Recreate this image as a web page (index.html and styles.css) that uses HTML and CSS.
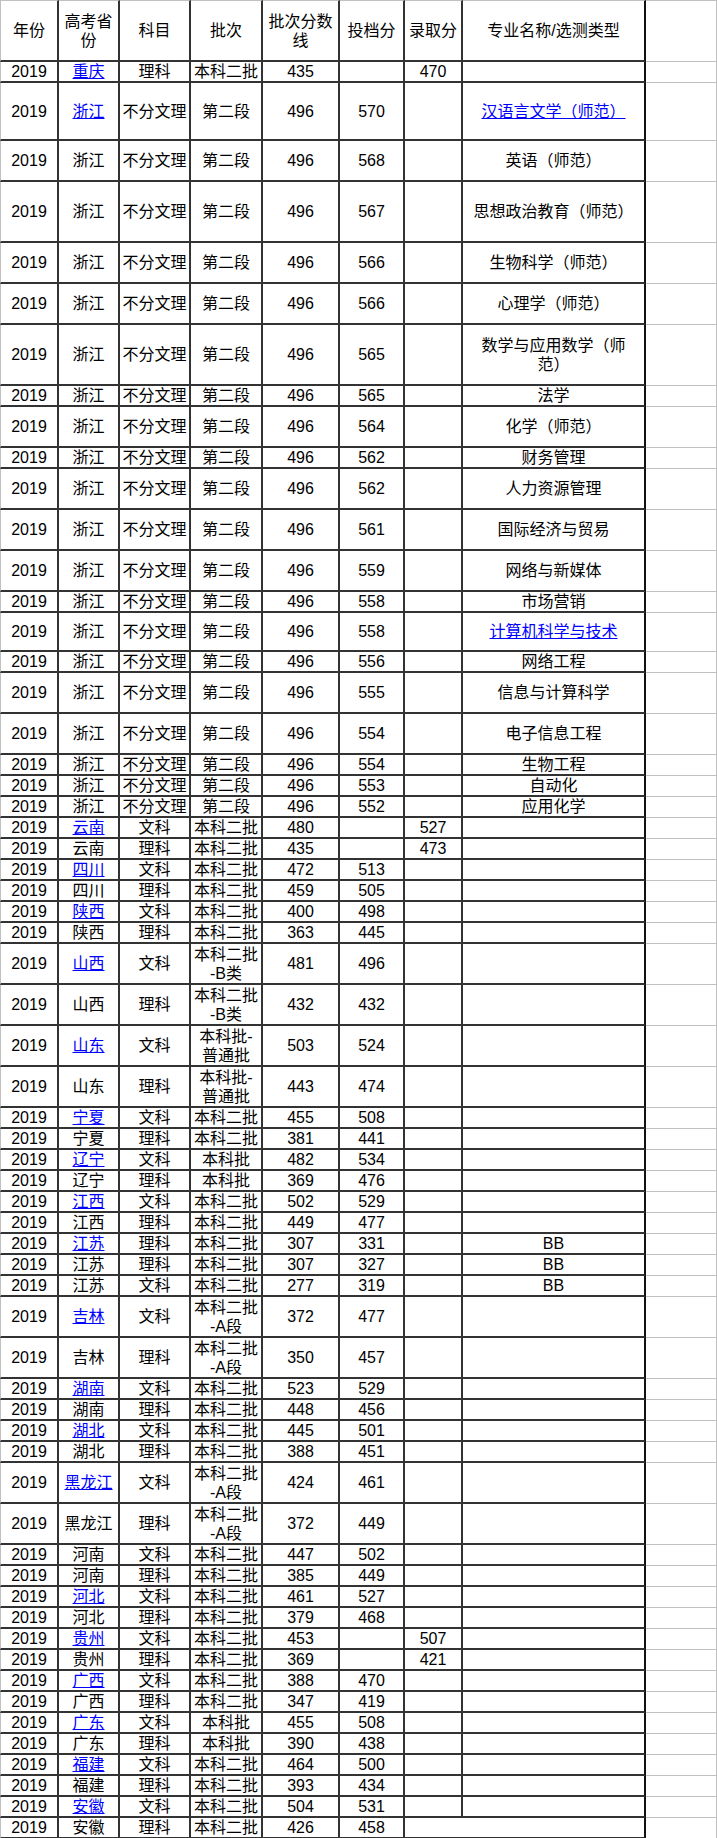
FILE: index.html
```html
<!DOCTYPE html>
<html lang="zh-CN">
<head>
<meta charset="utf-8">
<title>2019 录取分数</title>
<link rel="stylesheet" href="styles.css">
</head>
<body>
<table class="grid">
<thead>
<tr class="h62">
<th class="c1">年份</th><th class="c2">高考省份</th><th class="c3">科目</th><th class="c4">批次</th><th class="c5">批次分数线</th><th class="c6">投档分</th><th class="c7">录取分</th><th class="c8 mj">专业名称/选测类型</th><th class="c9 x"></th>
</tr>
</thead>
<tbody>
<tr class="h21"><td>2019</td><td><a href="#">重庆</a></td><td>理科</td><td>本科二批</td><td>435</td><td></td><td>470</td><td class="mj"></td><td class="x"></td></tr>
<tr class="h58"><td>2019</td><td><a href="#">浙江</a></td><td>不分文理</td><td>第二段</td><td>496</td><td>570</td><td></td><td class="mj"><a href="#">汉语言文学（师范）</a></td><td class="x"></td></tr>
<tr class="h41"><td>2019</td><td>浙江</td><td>不分文理</td><td>第二段</td><td>496</td><td>568</td><td></td><td class="mj">英语（师范）</td><td class="x"></td></tr>
<tr class="h61"><td>2019</td><td>浙江</td><td>不分文理</td><td>第二段</td><td>496</td><td>567</td><td></td><td class="mj">思想政治教育（师范）</td><td class="x"></td></tr>
<tr class="h41"><td>2019</td><td>浙江</td><td>不分文理</td><td>第二段</td><td>496</td><td>566</td><td></td><td class="mj">生物科学（师范）</td><td class="x"></td></tr>
<tr class="h41"><td>2019</td><td>浙江</td><td>不分文理</td><td>第二段</td><td>496</td><td>566</td><td></td><td class="mj">心理学（师范）</td><td class="x"></td></tr>
<tr class="h61"><td>2019</td><td>浙江</td><td>不分文理</td><td>第二段</td><td>496</td><td>565</td><td></td><td class="mj">数学与应用数学（师范）</td><td class="x"></td></tr>
<tr class="h21"><td>2019</td><td>浙江</td><td>不分文理</td><td>第二段</td><td>496</td><td>565</td><td></td><td class="mj">法学</td><td class="x"></td></tr>
<tr class="h41"><td>2019</td><td>浙江</td><td>不分文理</td><td>第二段</td><td>496</td><td>564</td><td></td><td class="mj">化学（师范）</td><td class="x"></td></tr>
<tr class="h21"><td>2019</td><td>浙江</td><td>不分文理</td><td>第二段</td><td>496</td><td>562</td><td></td><td class="mj">财务管理</td><td class="x"></td></tr>
<tr class="h41"><td>2019</td><td>浙江</td><td>不分文理</td><td>第二段</td><td>496</td><td>562</td><td></td><td class="mj">人力资源管理</td><td class="x"></td></tr>
<tr class="h41"><td>2019</td><td>浙江</td><td>不分文理</td><td>第二段</td><td>496</td><td>561</td><td></td><td class="mj">国际经济与贸易</td><td class="x"></td></tr>
<tr class="h41"><td>2019</td><td>浙江</td><td>不分文理</td><td>第二段</td><td>496</td><td>559</td><td></td><td class="mj">网络与新媒体</td><td class="x"></td></tr>
<tr class="h21"><td>2019</td><td>浙江</td><td>不分文理</td><td>第二段</td><td>496</td><td>558</td><td></td><td class="mj">市场营销</td><td class="x"></td></tr>
<tr class="h39"><td>2019</td><td>浙江</td><td>不分文理</td><td>第二段</td><td>496</td><td>558</td><td></td><td class="mj"><a href="#">计算机科学与技术</a></td><td class="x"></td></tr>
<tr class="h21"><td>2019</td><td>浙江</td><td>不分文理</td><td>第二段</td><td>496</td><td>556</td><td></td><td class="mj">网络工程</td><td class="x"></td></tr>
<tr class="h41"><td>2019</td><td>浙江</td><td>不分文理</td><td>第二段</td><td>496</td><td>555</td><td></td><td class="mj">信息与计算科学</td><td class="x"></td></tr>
<tr class="h41"><td>2019</td><td>浙江</td><td>不分文理</td><td>第二段</td><td>496</td><td>554</td><td></td><td class="mj">电子信息工程</td><td class="x"></td></tr>
<tr class="h21"><td>2019</td><td>浙江</td><td>不分文理</td><td>第二段</td><td>496</td><td>554</td><td></td><td class="mj">生物工程</td><td class="x"></td></tr>
<tr class="h21"><td>2019</td><td>浙江</td><td>不分文理</td><td>第二段</td><td>496</td><td>553</td><td></td><td class="mj">自动化</td><td class="x"></td></tr>
<tr class="h21"><td>2019</td><td>浙江</td><td>不分文理</td><td>第二段</td><td>496</td><td>552</td><td></td><td class="mj">应用化学</td><td class="x"></td></tr>
<tr class="h21"><td>2019</td><td><a href="#">云南</a></td><td>文科</td><td>本科二批</td><td>480</td><td></td><td>527</td><td class="mj"></td><td class="x"></td></tr>
<tr class="h21"><td>2019</td><td>云南</td><td>理科</td><td>本科二批</td><td>435</td><td></td><td>473</td><td class="mj"></td><td class="x"></td></tr>
<tr class="h21"><td>2019</td><td><a href="#">四川</a></td><td>文科</td><td>本科二批</td><td>472</td><td>513</td><td></td><td class="mj"></td><td class="x"></td></tr>
<tr class="h21"><td>2019</td><td>四川</td><td>理科</td><td>本科二批</td><td>459</td><td>505</td><td></td><td class="mj"></td><td class="x"></td></tr>
<tr class="h21"><td>2019</td><td><a href="#">陕西</a></td><td>文科</td><td>本科二批</td><td>400</td><td>498</td><td></td><td class="mj"></td><td class="x"></td></tr>
<tr class="h21"><td>2019</td><td>陕西</td><td>理科</td><td>本科二批</td><td>363</td><td>445</td><td></td><td class="mj"></td><td class="x"></td></tr>
<tr class="h41"><td>2019</td><td><a href="#">山西</a></td><td>文科</td><td>本科二批<wbr>-B类</td><td>481</td><td>496</td><td></td><td class="mj"></td><td class="x"></td></tr>
<tr class="h41"><td>2019</td><td>山西</td><td>理科</td><td>本科二批<wbr>-B类</td><td>432</td><td>432</td><td></td><td class="mj"></td><td class="x"></td></tr>
<tr class="h41"><td>2019</td><td><a href="#">山东</a></td><td>文科</td><td>本科批-<wbr>普通批</td><td>503</td><td>524</td><td></td><td class="mj"></td><td class="x"></td></tr>
<tr class="h41"><td>2019</td><td>山东</td><td>理科</td><td>本科批-<wbr>普通批</td><td>443</td><td>474</td><td></td><td class="mj"></td><td class="x"></td></tr>
<tr class="h21"><td>2019</td><td><a href="#">宁夏</a></td><td>文科</td><td>本科二批</td><td>455</td><td>508</td><td></td><td class="mj"></td><td class="x"></td></tr>
<tr class="h21"><td>2019</td><td>宁夏</td><td>理科</td><td>本科二批</td><td>381</td><td>441</td><td></td><td class="mj"></td><td class="x"></td></tr>
<tr class="h21"><td>2019</td><td><a href="#">辽宁</a></td><td>文科</td><td>本科批</td><td>482</td><td>534</td><td></td><td class="mj"></td><td class="x"></td></tr>
<tr class="h21"><td>2019</td><td>辽宁</td><td>理科</td><td>本科批</td><td>369</td><td>476</td><td></td><td class="mj"></td><td class="x"></td></tr>
<tr class="h21"><td>2019</td><td><a href="#">江西</a></td><td>文科</td><td>本科二批</td><td>502</td><td>529</td><td></td><td class="mj"></td><td class="x"></td></tr>
<tr class="h21"><td>2019</td><td>江西</td><td>理科</td><td>本科二批</td><td>449</td><td>477</td><td></td><td class="mj"></td><td class="x"></td></tr>
<tr class="h21"><td>2019</td><td><a href="#">江苏</a></td><td>理科</td><td>本科二批</td><td>307</td><td>331</td><td></td><td class="mj">BB</td><td class="x"></td></tr>
<tr class="h21"><td>2019</td><td>江苏</td><td>理科</td><td>本科二批</td><td>307</td><td>327</td><td></td><td class="mj">BB</td><td class="x"></td></tr>
<tr class="h21"><td>2019</td><td>江苏</td><td>文科</td><td>本科二批</td><td>277</td><td>319</td><td></td><td class="mj">BB</td><td class="x"></td></tr>
<tr class="h41"><td>2019</td><td><a href="#">吉林</a></td><td>文科</td><td>本科二批<wbr>-A段</td><td>372</td><td>477</td><td></td><td class="mj"></td><td class="x"></td></tr>
<tr class="h41"><td>2019</td><td>吉林</td><td>理科</td><td>本科二批<wbr>-A段</td><td>350</td><td>457</td><td></td><td class="mj"></td><td class="x"></td></tr>
<tr class="h21"><td>2019</td><td><a href="#">湖南</a></td><td>文科</td><td>本科二批</td><td>523</td><td>529</td><td></td><td class="mj"></td><td class="x"></td></tr>
<tr class="h21"><td>2019</td><td>湖南</td><td>理科</td><td>本科二批</td><td>448</td><td>456</td><td></td><td class="mj"></td><td class="x"></td></tr>
<tr class="h21"><td>2019</td><td><a href="#">湖北</a></td><td>文科</td><td>本科二批</td><td>445</td><td>501</td><td></td><td class="mj"></td><td class="x"></td></tr>
<tr class="h21"><td>2019</td><td>湖北</td><td>理科</td><td>本科二批</td><td>388</td><td>451</td><td></td><td class="mj"></td><td class="x"></td></tr>
<tr class="h41"><td>2019</td><td><a href="#">黑龙江</a></td><td>文科</td><td>本科二批<wbr>-A段</td><td>424</td><td>461</td><td></td><td class="mj"></td><td class="x"></td></tr>
<tr class="h41"><td>2019</td><td>黑龙江</td><td>理科</td><td>本科二批<wbr>-A段</td><td>372</td><td>449</td><td></td><td class="mj"></td><td class="x"></td></tr>
<tr class="h21"><td>2019</td><td>河南</td><td>文科</td><td>本科二批</td><td>447</td><td>502</td><td></td><td class="mj"></td><td class="x"></td></tr>
<tr class="h21"><td>2019</td><td>河南</td><td>理科</td><td>本科二批</td><td>385</td><td>449</td><td></td><td class="mj"></td><td class="x"></td></tr>
<tr class="h21"><td>2019</td><td><a href="#">河北</a></td><td>文科</td><td>本科二批</td><td>461</td><td>527</td><td></td><td class="mj"></td><td class="x"></td></tr>
<tr class="h21"><td>2019</td><td>河北</td><td>理科</td><td>本科二批</td><td>379</td><td>468</td><td></td><td class="mj"></td><td class="x"></td></tr>
<tr class="h21"><td>2019</td><td><a href="#">贵州</a></td><td>文科</td><td>本科二批</td><td>453</td><td></td><td>507</td><td class="mj"></td><td class="x"></td></tr>
<tr class="h21"><td>2019</td><td>贵州</td><td>理科</td><td>本科二批</td><td>369</td><td></td><td>421</td><td class="mj"></td><td class="x"></td></tr>
<tr class="h21"><td>2019</td><td><a href="#">广西</a></td><td>文科</td><td>本科二批</td><td>388</td><td>470</td><td></td><td class="mj"></td><td class="x"></td></tr>
<tr class="h21"><td>2019</td><td>广西</td><td>理科</td><td>本科二批</td><td>347</td><td>419</td><td></td><td class="mj"></td><td class="x"></td></tr>
<tr class="h21"><td>2019</td><td><a href="#">广东</a></td><td>文科</td><td>本科批</td><td>455</td><td>508</td><td></td><td class="mj"></td><td class="x"></td></tr>
<tr class="h21"><td>2019</td><td>广东</td><td>理科</td><td>本科批</td><td>390</td><td>438</td><td></td><td class="mj"></td><td class="x"></td></tr>
<tr class="h21"><td>2019</td><td><a href="#">福建</a></td><td>文科</td><td>本科二批</td><td>464</td><td>500</td><td></td><td class="mj"></td><td class="x"></td></tr>
<tr class="h21"><td>2019</td><td>福建</td><td>理科</td><td>本科二批</td><td>393</td><td>434</td><td></td><td class="mj"></td><td class="x"></td></tr>
<tr class="h21"><td>2019</td><td><a href="#">安徽</a></td><td>文科</td><td>本科二批</td><td>504</td><td>531</td><td></td><td class="mj"></td><td class="x"></td></tr>
<tr class="h21 last"><td>2019</td><td>安徽</td><td>理科</td><td>本科二批</td><td>426</td><td>458</td><td class="nr"></td><td class="mj"></td><td class="x"></td></tr>
</tbody>
</table>
</body>
</html>
```

FILE: styles.css
```css
html, body {
  margin: 0;
  padding: 0;
  background: #ffffff;
}

.grid {
  border-collapse: separate;
  border-spacing: 0;
  table-layout: fixed;
  width: 717px;
  font-family: "Liberation Sans", "Noto Sans CJK SC", sans-serif;
  font-size: 16px;
  line-height: 19px;
  color: #000000;
  text-spacing-trim: space-all;
}

.grid th,
.grid td {
  box-sizing: border-box;
  padding: 0 1px;
  border-right: 2px solid #333333;
  border-bottom: 2px solid #333333;
  text-align: center;
  vertical-align: middle;
  font-weight: normal;
  overflow: hidden;
}

.grid th {
  border-top: 1px solid #c0c0c0;
}

.grid tr > :first-child {
  border-left: 1px solid #c0c0c0;
}

.grid .c1 { width: 59px; }
.grid .c2 { width: 61px; }
.grid .c3 { width: 71px; }
.grid .c4 { width: 72px; }
.grid .c5 { width: 77px; }
.grid .c6 { width: 65px; }
.grid .c7 { width: 58px; }
.grid .c8 { width: 183px; }
.grid .c9 { width: 71px; }

.grid .mj {
  padding: 0 6px;
  border-right-color: #111111;
}

.grid .x {
  border-right: 1px solid #c0c0c0;
  border-bottom: 1px solid #c0c0c0;
}

.grid .nr {
  border-right: 0;
}

.grid a {
  color: #0000ff;
  text-decoration: underline;
}

.h62 { height: 62px; }
.h61 { height: 61px; }
.h58 { height: 58px; }
.h41 { height: 41px; }
.h39 { height: 39px; }
.h21 { height: 21px; }
```
